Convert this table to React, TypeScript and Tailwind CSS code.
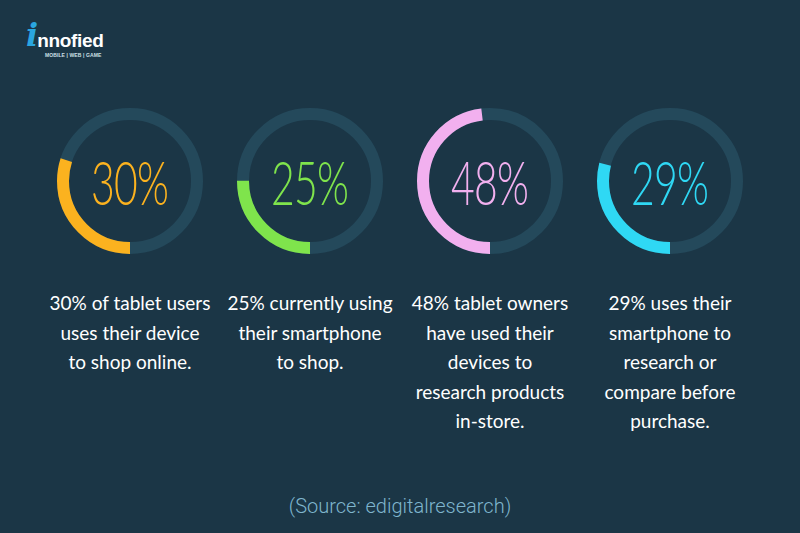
import React from 'react';

type Stat = {
  value: number;
  color: string;
  text: string;
  lines: string[];
};

const stats: Stat[] = [
  { value: 30, color: '#fbb21f', text: 'text-[#fbb21f]', lines: ['30% of tablet users', 'uses their device', 'to shop online.'] },
  { value: 25, color: '#7fe44c', text: 'text-[#7fe44c]', lines: ['25% currently using', 'their smartphone', 'to shop.'] },
  { value: 48, color: '#f2b0ef', text: 'text-[#f2b0ef]', lines: ['48% tablet owners', 'have used their', 'devices to', 'research products', 'in-store.'] },
  { value: 29, color: '#2fd8f4', text: 'text-[#2fd8f4]', lines: ['29% uses their', 'smartphone to', 'research or', 'compare before', 'purchase.'] },
];

function Ring({ stat }: { stat: Stat }) {
  const r = 67;
  const c = 2 * Math.PI * r;
  return (
    <div className="relative w-[148px] h-[148px]">
      <svg width="148" height="148" viewBox="0 0 148 148" className="rotate-90">
        <circle cx="74" cy="74" r={r} fill="none" stroke="#24495b" strokeWidth="12" />
        <circle
          cx="74"
          cy="74"
          r={r}
          fill="none"
          stroke={stat.color}
          strokeWidth="12"
          strokeDasharray={`${(c * stat.value) / 100} ${c}`}
        />
      </svg>
      <div className="absolute inset-0 flex items-center justify-center">
        <span className={`${stat.text} font-['Lato',sans-serif] font-light text-[62px] leading-none scale-x-[0.66] tracking-[-1px]`}>
          {stat.value}%
        </span>
      </div>
    </div>
  );
}

function Logo() {
  return (
    <div className="flex flex-col items-start">
      <div className="flex items-end leading-none">
        <span className="font-['DejaVu_Serif',serif] italic font-bold text-[#2aa6e0] text-[32px] leading-none -mr-[1px]">i</span>
        <span className="font-['Liberation_Sans',sans-serif] font-bold text-white text-[19px] leading-none tracking-[-0.3px] mb-[1px]">nnofied</span>
      </div>
      <span className="ml-[19px] mt-[2px] font-['Liberation_Sans',sans-serif] text-[5px] font-bold tracking-[0.1px] text-[#cfe0e8] leading-none">
        MOBILE | WEB | GAME
      </span>
    </div>
  );
}

export default function App() {
  return (
    <main className="w-[800px] h-[533px] bg-[#1b3646] flex flex-col overflow-hidden">
      <header className="pt-[19px] pl-[26px] h-[107px]">
        <Logo />
      </header>

      <section className="grid grid-cols-4 w-[720px] mx-auto">
        {stats.map((s) => (
          <div key={s.value} className="flex flex-col items-center">
            <Ring stat={s} />
            <div className="mt-[33px] text-center text-white font-['Lato',sans-serif] text-[19px] leading-[29.5px]">
              {s.lines.map((l) => (
                <div key={l} className="whitespace-nowrap">{l}</div>
              ))}
            </div>
          </div>
        ))}
      </section>

      <footer className="mt-auto pb-[12px] text-center font-['Roboto',sans-serif] font-light text-[20px] text-[#7fb5cd]">
        (Source: edigitalresearch)
      </footer>
    </main>
  );
}
